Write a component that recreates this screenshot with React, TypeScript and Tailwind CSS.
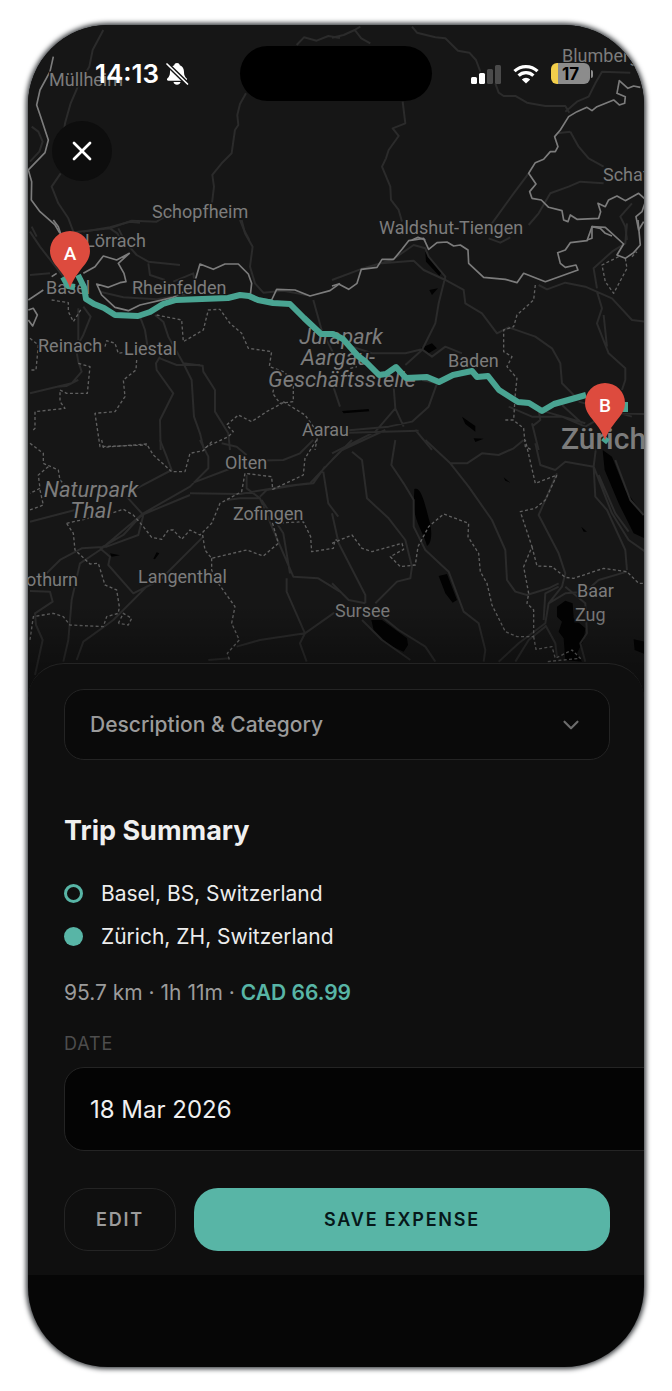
import type { ReactNode } from "react";
import { ChevronDown, X } from "lucide-react";

type Tile = {
  x: number;
  y: number;
  roads: string[];
  borders: string[];
  districts: string[];
  water: string[];
};

/* Each tile is drawn on a grid three times finer than the map itself. */
const tiles: Tile[] = [
  {
    x: 0,
    y: 0,
    roads: [
      "M310 90L278 150L268 200L240 245L212 310L195 370L190 410",
      "M182 520L155 560L175 610L205 655L222 700",
      "M95 380L115 395L128 425L118 455L90 485",
      "M738 280L720 312L712 345L715 375L705 390L695 460L665 490L637 525L642 560L636 610",
      "M720 660L732 690L748 720",
      "M222 697L330 685L395 662L470 665L510 640",
      "M330 685L352 700L362 720",
      "M890 135L912 112L950 122L985 108L1020 114",
      "M95 680L110 710",
    ],
    borders: ["M160 170L150 215L120 270L110 315L122 350L145 420L135 458L85 510L95 545L94 600L120 635L165 675L180 700"],
    districts: [],
    water: [],
  },
  {
    x: 332,
    y: 0,
    roads: [
      "M0 113L35 105L68 90L88 115L115 130M68 90L85 80",
      "M240 80L255 98L310 112L340 115L378 152L412 158L432 180L445 215",
      "M490 250L500 278L515 288L550 288L585 308L640 318L700 318L712 338",
      "M700 335L735 305L770 290L790 250L810 215L895 218",
      "M212 305L220 370L182 385L200 408L170 450L162 475L150 500L175 560L177 600L200 630L210 665",
      "M715 395L740 440L770 475L815 500M715 395L675 400",
      "M590 520L545 580L480 670",
      "M815 550L745 545L710 560L655 580L620 640L590 675",
      "M900 610L865 650L880 680L885 720",
    ],
    borders: [
      "M925 262L905 258L888 265L862 242L855 280L880 290L878 310L862 315L845 300L795 320L780 332L765 322L735 335L710 350L685 390L668 410L678 440L670 455L655 455L635 478L610 488L590 520L612 552L593 575L600 595L628 600L650 622L690 632L695 660L708 665L715 645L735 658L800 655L806 635L798 610L820 620L830 600L855 588L880 602L920 580L942 600L930 635L912 650L920 690L935 665",
      "M765 720L780 715L780 680L805 685L820 700L840 708",
      "M240 720L258 712L280 720",
    ],
    districts: [],
    water: [],
  },
  {
    x: 0,
    y: 220,
    roads: [
      "M90 35L120 80L190 170",
      "M250 35L330 22L390 5L420 8M355 25L375 65L410 105L445 125L540 135",
      "M445 130L450 165L495 180M520 185L580 160L585 200",
      "M725 0L735 40L758 80L750 140L765 190L790 218L850 212L920 225",
      "M300 215L370 232L470 238L580 220",
      "M250 260L272 290L250 345L228 385L235 425L245 455L215 490L90 520",
      "M170 500L200 498L235 480",
      "M235 265L235 360M420 290L435 330L442 375",
      "M465 285L490 305L505 350L550 430L608 437L610 455L645 510L645 575L685 640L690 690",
      "M480 410L468 430L470 450L520 520L480 600L482 690",
      "M550 430L575 480L582 590L600 640L612 690",
      "M480 415L530 435L600 435",
      "M90 165L150 160",
      "M940 240L965 330L1015 430L1000 500L1020 560",
    ],
    borders: [
      "M160 0L175 20L190 65M250 160L285 140L310 108L350 120L388 100L355 130L372 160L378 185L360 188L325 202L290 192L305 225L345 262L385 272L420 255L520 232L580 200L600 132L640 148L675 132L715 132L745 162L755 190L750 235L815 240L830 208L885 210L930 228L990 212L1020 190",
      "M85 240L130 210M85 270L100 265L112 285L98 318L85 300M155 170L170 160",
    ],
    districts: [
      "M155 240L205 248L205 275L220 305L245 265",
      "M470 285L545 300L550 365L610 330L625 270L660 268L690 310L725 340L745 385L815 395L808 440L850 455L880 480L880 545L840 550L818 520L825 490M850 548L800 575L755 605L715 585L680 615L700 635L685 650L620 680L610 690",
      "M410 420L408 450L370 480L375 530L345 575L285 580L300 680L440 675",
      "M90 355L115 375L108 450L90 450M235 430L270 440L262 520L200 520L180 510L180 545L195 565L105 575L105 625L95 635",
      "M315 380L320 362L345 370L355 400L385 395",
      "M850 545L915 585L955 640L945 690",
    ],
    water: [],
  },
  {
    x: 332,
    y: 220,
    roads: [
      "M0 180L85 148L180 120L245 75L280 85L290 110L340 170L320 250L310 310L270 390L220 435",
      "M150 130L245 122L275 150L340 180L395 210L400 250L450 280L495 340L530 322L610 350L660 385L685 430L690 490L740 540",
      "M60 380L120 400L220 400L270 388L300 410L340 380L390 400",
      "M470 55L505 68L535 52M885 10L880 70L840 95L785 145L795 205",
      "M620 195L645 208L700 188L760 200L840 235L900 300L940 305",
      "M795 215L810 265L795 310L830 400L880 445L880 480L870 510M815 285L825 380",
      "M270 480L315 490L290 560L240 605L170 620L0 635",
      "M185 500L190 565L215 620M190 565L130 635L0 700",
      "M250 630L300 690M530 560L600 590L690 590L760 620L830 580L940 582",
      "M600 610L620 690M0 640L260 632M160 630L30 690M740 545L900 590M690 555L750 610",
      "M620 570L625 600L600 620M640 575L760 610",
    ],
    borders: [
      "M0 198L20 192L50 208L75 190L88 148L135 142L150 118L185 118L210 88L230 62L275 55L290 88L315 68L345 66L365 78L385 75L408 90L410 130L455 172L520 178L555 188L575 160L640 185L738 150L732 135L700 142L685 130L677 98L700 90L715 68L765 62L780 20L820 22L875 72L855 105L880 115L905 98L925 75L918 0",
    ],
    districts: [
      "M610 195L605 240L555 285L545 320L515 330L515 395L540 410L525 440L555 475L550 520L545 600L520 600M550 605L575 625L580 680L600 690",
      "M860 110L810 135L820 185L845 220L885 145L880 115M900 110L915 95",
      "M55 445L75 440",
    ],
    water: [
      "M280 95L330 155L322 168L282 125Z",
      "M292 210L318 205L300 225Z",
      "M265 385L300 370L315 385L290 400Z",
      "M30 573L110 567L112 574L35 580Z",
      "M390 590L430 618L430 635L400 612Z",
      "M425 655L455 656L430 666Z",
    ],
  },
  {
    x: 0,
    y: 440,
    roads: [
      "M480 0L500 50L515 90L410 145M600 0L625 50L625 85L570 140L430 220L300 330L240 370L215 480L205 600L190 665",
      "M580 128L680 90L760 62L850 60L900 40L940 0M665 10L710 20L740 45",
      "M570 160L720 162L860 138L930 130L1020 35",
      "M90 245L225 210M380 170L430 225L415 285L320 320L245 325L180 360L140 400",
      "M570 165L425 225L370 285L300 325",
      "M780 175L820 270L880 410L955 415L1020 455",
      "M785 180L850 280L870 400M970 95L985 190L1015 230",
      "M300 325L330 350L325 375L400 460L480 420L610 290",
      "M440 440L340 540L250 605L230 660",
      "M90 453L150 455L158 485L105 520L108 555L128 600L105 705",
      "M860 415L860 455L915 580L900 610L920 665M710 620L780 600L915 580L1000 520L1020 515",
      "M740 105L740 145L780 175L720 175L680 180M780 170L800 150L890 135L940 130L975 80",
      "M625 660L690 655",
    ],
    borders: [],
    districts: [
      "M305 0L310 22L440 12L460 45L515 95L555 95L570 40L610 32L640 0",
      "M90 10L130 40L130 70L175 90L180 120L210 150M145 80L115 105L120 145L90 160M120 150L130 195L90 210",
      "M200 250L340 218L370 208L400 225L430 260L455 292L485 298L505 270L520 270L545 298L570 270L600 285L635 250L660 190L725 155L735 100L815 110L818 148L910 105L915 55L950 0",
      "M200 250L220 280L225 330L270 372L295 370L315 435L350 450L358 500L355 520L320 530L310 560L210 555L190 530L160 520L100 530L90 600",
      "M355 550L370 520L395 535L385 555L355 550",
      "M608 285L615 330L635 355L740 330L790 348L835 310L818 250L910 245L932 290L935 335L1000 325L1005 300L1020 300",
      "M635 355L635 390L655 430L705 500L695 550L718 600L682 640L690 665",
    ],
    water: ["M330 340L360 346L335 350Z", "M470 337L478 340L465 358L460 356Z"],
  },
  {
    x: 332,
    y: 440,
    roads: [
      "M0 60L60 0M60 35L90 60L105 175L170 235L220 300L240 380L235 415L195 425L130 490",
      "M190 0L178 75L215 130L245 180L245 260L280 330L350 395L395 515L440 550L460 630L455 665",
      "M280 0L355 70L410 140L480 240L520 330L525 420L550 455L585 465L650 445L680 430",
      "M355 70L405 70L450 40L500 45L545 25L575 0",
      "M0 220L20 310L100 465L100 490M0 430L50 480L100 490M90 540L150 600L235 660M150 530L200 570L280 620L310 665",
      "M610 10L625 75L670 90L700 65L785 80L795 0M785 80L790 170L825 210L880 330L885 390",
      "M785 80L840 220L890 300L940 335M800 105L850 220L890 275",
      "M675 100L620 225L680 340L700 400L690 440L650 490L640 550L560 610L500 665",
      "M885 395L800 420L760 455L700 460L650 490M700 440L760 490L765 580L745 610L760 665",
      "M640 555L670 610L675 650M680 440L640 460L635 540",
      "M850 60L895 180L935 225",
      "M550 665L590 600L640 560",
    ],
    borders: [],
    districts: [
      "M0 310L60 285L90 325L120 335L210 310L215 328L175 350L205 380L250 375L258 320L290 260L335 222L410 250L408 290L440 340L445 395L465 430L480 495L520 575L555 590L605 590L605 510L585 490L590 460L575 380L600 320L565 215L610 205L640 180L675 105L610 130L580 0",
      "M600 320L615 378L660 380L700 412L725 415L815 385L885 395L920 430L940 430",
      "M605 590L612 628L660 620L670 655L720 630L745 655L645 665",
    ],
    water: [
      "M247 147C265 140 275 175 290 235C302 270 300 310 285 318C280 290 250 250 245 200Z",
      "M320 408L345 402L375 480L362 488L340 460Z",
      "M118 540L150 540L225 595L228 615L215 635L170 615L125 570Z",
      "M812 30L840 50L880 150L938 230L938 295L905 280L860 190L818 90Z",
      "M675 500L700 482L722 490L725 535L760 565L755 600L735 640L750 665L700 660L695 595L680 575L690 545L675 530Z",
      "M905 598L938 605L938 642L908 630Z",
      "M748 260L765 275L755 275Z",
      "M515 112L535 128L520 122Z",
    ],
  },
];

type Place = { x: number; y: number; name: string; look?: string; anchor?: "start" | "middle" };

const places: Place[] = [
  { x: 49, y: 86, name: "Müllheim" },
  { x: 152, y: 218, name: "Schopfheim" },
  { x: 562, y: 62, name: "Blumberg" },
  { x: 603, y: 181, name: "Schaffhausen" },
  { x: 379, y: 234, name: "Waldshut-Tiengen" },
  { x: 85, y: 247, name: "Lörrach" },
  { x: 46, y: 294, name: "Basel" },
  { x: 132, y: 294, name: "Rheinfelden" },
  { x: 38, y: 352, name: "Reinach" },
  { x: 124, y: 355, name: "Liestal" },
  { x: 448, y: 367, name: "Baden" },
  { x: 302, y: 436, name: "Aarau" },
  { x: 225, y: 469, name: "Olten" },
  { x: 233, y: 520, name: "Zofingen" },
  { x: 26, y: 586, name: "othurn" },
  { x: 138, y: 583, name: "Langenthal" },
  { x: 335, y: 617, name: "Sursee" },
  { x: 577, y: 597, name: "Baar" },
  { x: 575, y: 621, name: "Zug" },
  { x: 341, y: 344, name: "Jurapark", look: "text-[22px] italic", anchor: "middle" },
  { x: 338, y: 365, name: "Aargau-", look: "text-[22px] italic", anchor: "middle" },
  { x: 342, y: 387, name: "Geschäftsstelle", look: "text-[22px] italic", anchor: "middle" },
  { x: 91, y: 497, name: "Naturpark", look: "text-[22px] italic", anchor: "middle" },
  { x: 91, y: 518, name: "Thal", look: "text-[22px] italic", anchor: "middle" },
  { x: 561, y: 449, name: "Zürich", look: "text-3xl font-medium" },
];

function Pin({ x, y, letter }: { x: number; y: number; letter: string }) {
  return (
    <g transform={`translate(${x} ${y})`}>
      <path
        d="M0 36C-2 30-5 25-9 20C-14 13-20 8-20-1A20 20 0 1 1 20-1C20 8 14 13 9 20C5 25 2 30 0 36Z"
        fill="#dd4b3e"
      />
      <text y="8" textAnchor="middle" fill="#fff" className="text-[19px] font-medium">
        {letter}
      </text>
    </g>
  );
}

function RouteMap() {
  return (
    <svg
      viewBox="28 25 616 676"
      preserveAspectRatio="xMidYMid slice"
      className="absolute inset-0 h-full w-full bg-[#161616] font-['Roboto',sans-serif]"
      role="img"
      aria-label="Route from Basel to Zürich"
    >
      <g fill="none" strokeLinejoin="round">
        {tiles.map((tile) => (
          <g key={`${tile.x}-${tile.y}`} transform={`translate(${tile.x} ${tile.y}) scale(0.3333)`}>
            <path d={tile.water.join("")} fill="#020202" />
            <path d={tile.roads.join("")} stroke="#2b2b2b" strokeWidth="6" />
            <path d={tile.districts.join("")} stroke="#606060" strokeWidth="4" strokeDasharray="9 7" />
            <path d={tile.borders.join("")} stroke="#7c7c7c" strokeWidth="5" />
          </g>
        ))}
      </g>
      <g fill="#7c7c7c" stroke="#161616" strokeWidth="3" paintOrder="stroke">
        {places.map((place) => (
          <text
            key={place.name}
            x={place.x}
            y={place.y}
            textAnchor={place.anchor ?? "start"}
            className={place.look ?? "text-lg"}
          >
            {place.name}
          </text>
        ))}
      </g>
      <path
        d="M63 277L68 286L75 287M78 275L84 287L86 299L94 304L104 308L115 315L138 316L150 312L163 304L176 300L228 298L240 295L249 296L258 300L273 303L290 304L304 318L321 334L333 334L343 339L358 356L366 362L379 375L386 374L396 367L406 378L427 377L439 382L453 375L472 371L477 377L488 376L499 390L518 402L529 403L542 411L554 404L586 395M625 402L625 412M603 438L608 442"
        fill="none"
        stroke="#49a492"
        strokeWidth="6"
        strokeLinejoin="round"
      />
      <Pin x={70} y={252} letter="A" />
      <Pin x={605} y={404} letter="B" />
    </svg>
  );
}

function StatusBar() {
  return (
    <div className="grid h-[55px] grid-cols-[1fr_192px_1fr] items-center">
      <div className="flex items-center justify-center gap-1.5 pl-4 text-white">
        <span className="text-[26px] leading-8 font-semibold">14:13</span>
        <svg viewBox="0 0 24 24" className="size-6" aria-label="Silent">
          <path
            d="M12 1c1.500 0 2.500.9 2.800 2.200C17.600 4.300 19 6.800 19 10c0 3.300 1 4.800 2.500 6.300 1.100 1.100.5 2.400-.9 2.400H3.400c-1.400 0-2-1.300-.9-2.400C4 14.800 5 13.300 5 10c0-3.200 1.400-5.700 4.200-6.800C9.500 1.900 10.500 1 12 1ZM8.500 20h7c-.3 1.800-1.700 2.800-3.500 2.800S8.800 21.800 8.500 20Z"
            fill="currentColor"
          />
          <path d="M2 2L22.500 22" stroke="#161616" strokeWidth="4.500" />
          <path d="M2 2L22.500 22" stroke="currentColor" strokeWidth="1.700" strokeLinecap="round" />
        </svg>
      </div>
      <div className="h-full rounded-full bg-black" />
      <div className="flex items-center justify-center gap-3 pr-3">
        <svg viewBox="0 0 30 20" className="h-5 w-[30px]" aria-label="Signal">
          <rect x="0" y="13" width="6" height="7" rx="1.500" fill="#fff" />
          <rect x="8" y="9" width="6" height="11" rx="1.500" fill="#fff" />
          <rect x="16" y="5" width="6" height="15" rx="1.500" fill="#4a4a4a" />
          <rect x="24" y="1" width="6" height="19" rx="1.500" fill="#4a4a4a" />
        </svg>
        <svg viewBox="0 0 26 20" className="h-5 w-[26px]" fill="none" stroke="#fff" aria-label="Wi-Fi">
          <path d="M1.500 7.200A16.500 16.500 0 0 1 24.500 7.200" strokeWidth="3.200" />
          <path d="M5.600 11.700A10.600 10.600 0 0 1 20.400 11.700" strokeWidth="3.200" />
          <path d="M13 19.500L8.800 15.400A6 6 0 0 1 17.200 15.400Z" fill="#fff" stroke="none" />
        </svg>
        <div className="flex items-center gap-px">
          <div className="flex h-[21px] w-[39px] items-center justify-center rounded-md bg-linear-to-r from-[#f3cf4b] from-18% to-[#8c8c8c] to-18% text-[17px] leading-5 font-bold text-black">
            17
          </div>
          <div className="h-2 w-0.5 rounded-r-full bg-[#8c8c8c]" />
        </div>
      </div>
    </div>
  );
}

function Stop({ marker, children }: { marker: string; children: ReactNode }) {
  return (
    <li className="flex h-[43px] items-center gap-[18px]">
      <span className={`size-[19px] rounded-full ${marker}`} />
      {children}
    </li>
  );
}

export default function App() {
  return (
    <div className="min-h-screen bg-white px-7 pt-[25px] pb-[23px] font-['Inter',sans-serif]">
      <main className="overflow-hidden rounded-[80px] bg-[#060606] shadow-[0_0_5px_2px_#3a3d40]">
        <header className="relative h-[676px]">
          <RouteMap />
          <div className="absolute inset-x-0 bottom-0 h-24 bg-linear-to-b from-transparent to-black/50" />
          <div className="relative pt-[21px]">
            <StatusBar />
            <button
              type="button"
              aria-label="Close"
              className="mt-5 ml-6 flex size-[60px] items-center justify-center rounded-full bg-[#0d0d0d] text-white"
            >
              <X className="size-8" strokeWidth={2} />
            </button>
          </div>
        </header>

        <section className="relative -mt-[38px] overflow-hidden rounded-t-[36px] border-t border-[#242424] bg-[#0f0f0f] pt-[25px] pr-[34px] pb-6 pl-9">
          <button
            type="button"
            aria-expanded="false"
            className="flex h-[71px] w-full items-center justify-between rounded-[20px] border border-[#242424] bg-[#0a0a0a] px-[25px] text-[21px] font-medium text-[#9b9b9b]"
          >
            Description &amp; Category
            <ChevronDown className="size-[26px] text-[#6b6b6b]" strokeWidth={2} />
          </button>

          <h1 className="mt-[53px] text-[27px] leading-9 font-bold text-[#f0f0f0]">Trip Summary</h1>

          <ul className="mt-[23px] text-[21px] text-[#ededed]">
            <Stop marker="border-[3px] border-[#58b5a6]">Basel, BS, Switzerland</Stop>
            <Stop marker="bg-[#58b5a6]">Zürich, ZH, Switzerland</Stop>
          </ul>

          <p className="mt-[19px] text-[21px] leading-8 text-[#9b9b9b]">
            95.7 km · 1h 11m · <strong className="font-semibold text-[#58b5a6]">CAD 66.99</strong>
          </p>

          <label htmlFor="trip-date" className="mt-[25px] block text-lg leading-5 tracking-wider text-[#4d4d4d]">
            DATE
          </label>
          <input
            id="trip-date"
            type="text"
            defaultValue="18 Mar 2026"
            className="mt-[13px] block h-[84px] w-[calc(100%+64px)] rounded-[20px] border border-[#242424] bg-[#040404] px-[25px] text-2xl text-[#f0f0f0]"
          />

          <div className="mt-[37px] flex gap-[18px]">
            <button
              type="button"
              className="h-[63px] w-28 rounded-3xl border border-[#242424] text-lg font-semibold tracking-widest text-[#9b9b9b]"
            >
              EDIT
            </button>
            <button
              type="button"
              className="h-[63px] flex-1 rounded-3xl bg-[#58b5a6] text-lg font-semibold tracking-widest text-[#07181a]"
            >
              SAVE EXPENSE
            </button>
          </div>
        </section>

        <div className="h-[92px]" />
      </main>
    </div>
  );
}
